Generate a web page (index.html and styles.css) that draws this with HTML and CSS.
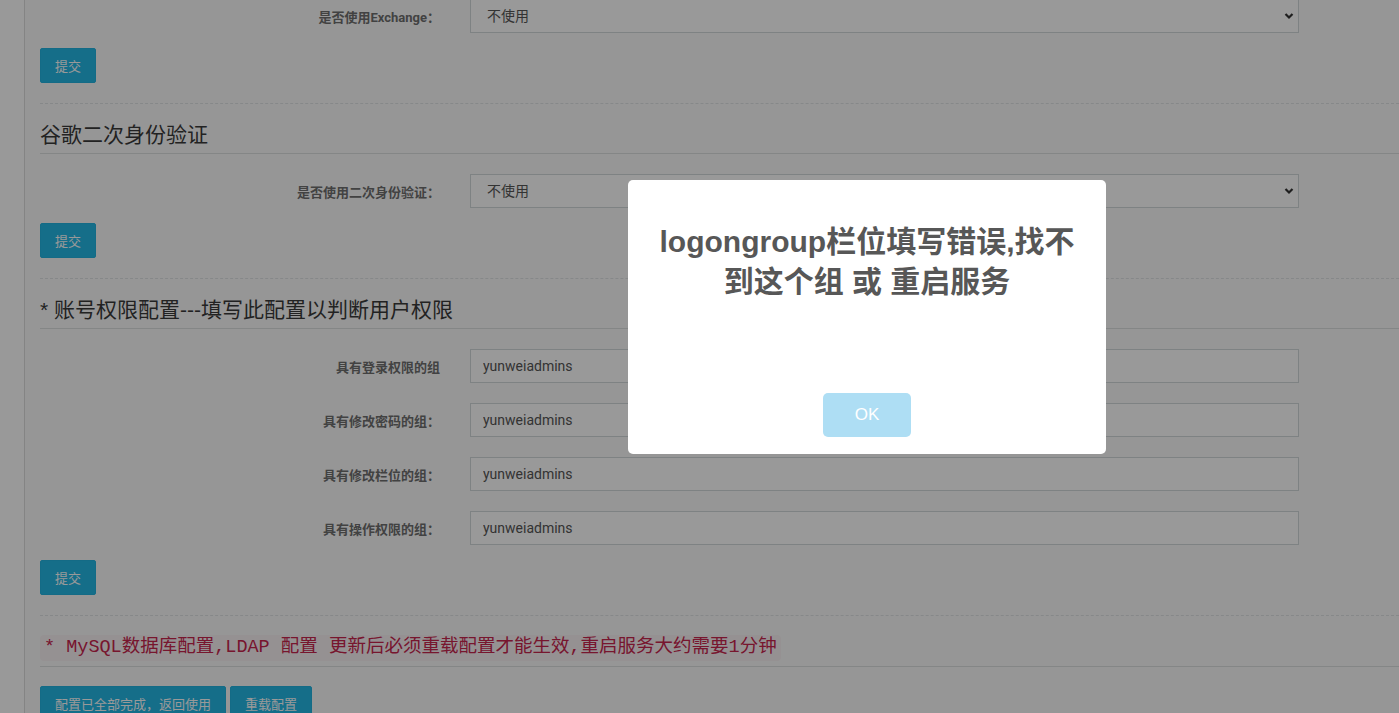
FILE: index.html
```html
<!DOCTYPE html>
<html lang="zh-CN">
<head>
<meta charset="utf-8">
<title>配置</title>
<link rel="stylesheet" href="styles.css">
</head>
<body>
<div class="app">
  <aside class="rail"></aside>
  <main class="content">
    <form class="section section-first">
      <div class="field">
        <label class="label">是否使用Exchange：</label>
        <div class="select-wrap">
          <select class="control select"><option>不使用</option></select>
          <svg class="chev" width="10" height="8" viewBox="0 0 10 8"><path d="M1.5 2 L5 5.5 L8.5 2" fill="none" stroke="#333" stroke-width="2.2"/></svg>
        </div>
      </div>
      <button type="button" class="btn">提交</button>
    </form>
    <hr class="dashed">
    <h3 class="title">谷歌二次身份验证</h3>
    <form class="section">
      <div class="field">
        <label class="label">是否使用二次身份验证：</label>
        <div class="select-wrap">
          <select class="control select"><option>不使用</option></select>
          <svg class="chev" width="10" height="8" viewBox="0 0 10 8"><path d="M1.5 2 L5 5.5 L8.5 2" fill="none" stroke="#333" stroke-width="2.2"/></svg>
        </div>
      </div>
      <button type="button" class="btn">提交</button>
    </form>
    <hr class="dashed">
    <h3 class="title">* 账号权限配置---填写此配置以判断用户权限</h3>
    <form class="section">
      <div class="fields">
        <div class="field">
          <label class="label">具有登录权限的组</label>
          <input class="control" value="yunweiadmins">
        </div>
        <div class="field">
          <label class="label">具有修改密码的组：</label>
          <input class="control" value="yunweiadmins">
        </div>
        <div class="field">
          <label class="label">具有修改栏位的组：</label>
          <input class="control" value="yunweiadmins">
        </div>
        <div class="field">
          <label class="label">具有操作权限的组：</label>
          <input class="control" value="yunweiadmins">
        </div>
      </div>
      <button type="button" class="btn">提交</button>
    </form>
    <hr class="dashed">
    <h4 class="title title-code"><code class="code">* MySQL数据库配置,LDAP 配置 更新后必须重载配置才能生效,重启服务大约需要1分钟</code></h4>
    <div class="actions">
      <button type="button" class="btn">配置已全部完成，返回使用</button>
      <button type="button" class="btn">重载配置</button>
    </div>
  </main>
</div>

<div class="overlay"></div>
<div class="alert">
  <h2 class="alert-title">logongroup栏位填写错误,找不到这个组 或 重启服务</h2>
  <div class="alert-spacer"></div>
  <div class="alert-buttons">
    <button type="button" class="alert-ok">OK</button>
  </div>
</div>
</body>
</html>
```

FILE: styles.css
```css
html, body {
  margin: 0;
  padding: 0;
  height: 100%;
  overflow: hidden;
}
body {
  font-family: Roboto, "Noto Sans CJK SC", sans-serif;
  font-size: 14px;
  color: #58666e;
  background: #fff;
}
.app {
  display: flex;
  min-height: 100%;
}
.rail {
  width: 24px;
  flex: none;
  background: #fff;
  border-right: 1px solid #dcdcdc;
}
.content {
  flex: 1;
  background: #fbfbfb;
  padding-left: 15px;
}
.section {
  margin: 20px 0 0;
}
.section-first {
  margin-top: -1px;
}
.fields {
  display: flex;
  flex-direction: column;
  gap: 20px;
}
.field {
  display: grid;
  grid-template-columns: 400px 829px;
  column-gap: 30px;
  align-items: center;
}
.label {
  text-align: right;
  font-weight: bold;
  font-size: 13px;
  color: #6e6e6e;
  font-family: Roboto, "Noto Sans CJK SC", sans-serif;
}
.control {
  box-sizing: border-box;
  height: 34px;
  width: 100%;
  border: 1px solid #d3d9db;
  background: #fff;
  border-radius: 0;
  padding: 0 12px;
  font-family: Roboto, "Noto Sans CJK SC", sans-serif;
  font-size: 14px;
  color: #555;
  outline: none;
}
.select-wrap {
  position: relative;
}
.select {
  appearance: none;
  -webkit-appearance: none;
  padding-left: 16px;
}
.chev {
  position: absolute;
  right: 5px;
  top: 13px;
  pointer-events: none;
}
.btn {
  display: inline-block;
  margin-top: 15px;
  height: 35px;
  padding: 0 14px;
  border: 1px solid #22b3e0;
  border-radius: 2px;
  background: #23b7e5;
  color: #fff;
  font-family: "Noto Sans CJK SC", sans-serif;
  font-size: 13px;
  cursor: pointer;
}
.dashed {
  border: 0;
  border-top: 1px dashed #dfe3e5;
  height: 0;
  margin: 20px 0 0;
}
.title {
  margin: 16px 0 0;
  padding: 2px 0 5px;
  border-bottom: 1px solid #dcdfe0;
  font-family: "Liberation Sans", "Noto Sans CJK SC", sans-serif;
  font-weight: 400;
  font-size: 21px;
  line-height: 26px;
  color: #3a3a3a;
}
.title-code {
  margin-top: 19px;
  padding: 0 0 5px;
}
.code {
  display: inline-block;
  vertical-align: top;
  font-family: "Liberation Mono", "Noto Sans CJK SC", monospace;
  font-size: 18.5px;
  line-height: 26px;
  padding: 0 4px;
  color: #c7254e;
  background: #f9f2f4;
  border-radius: 4px;
}
.actions {
  display: flex;
  gap: 4px;
  margin-top: 4px;
}
.overlay {
  position: fixed;
  inset: 0;
  background: rgba(0, 0, 0, 0.4);
}
.alert {
  position: fixed;
  left: 628px;
  top: 180px;
  width: 478px;
  box-sizing: border-box;
  padding: 17px;
  background: #fff;
  border-radius: 5px;
  text-align: center;
}
.alert-title {
  margin: 25px 0;
  font-family: "Liberation Sans", "Noto Sans CJK SC", sans-serif;
  font-size: 30px;
  font-weight: 600;
  line-height: 40px;
  color: #575757;
}
.alert-spacer {
  height: 40px;
}
.alert-buttons {
  display: flex;
  justify-content: center;
  margin-top: 26px;
}
.alert-ok {
  height: 44px;
  padding: 0 32px;
  border: 0;
  border-radius: 5px;
  background: #aedef4;
  color: #fff;
  font-family: "Liberation Sans", sans-serif;
  font-size: 17px;
}
```
